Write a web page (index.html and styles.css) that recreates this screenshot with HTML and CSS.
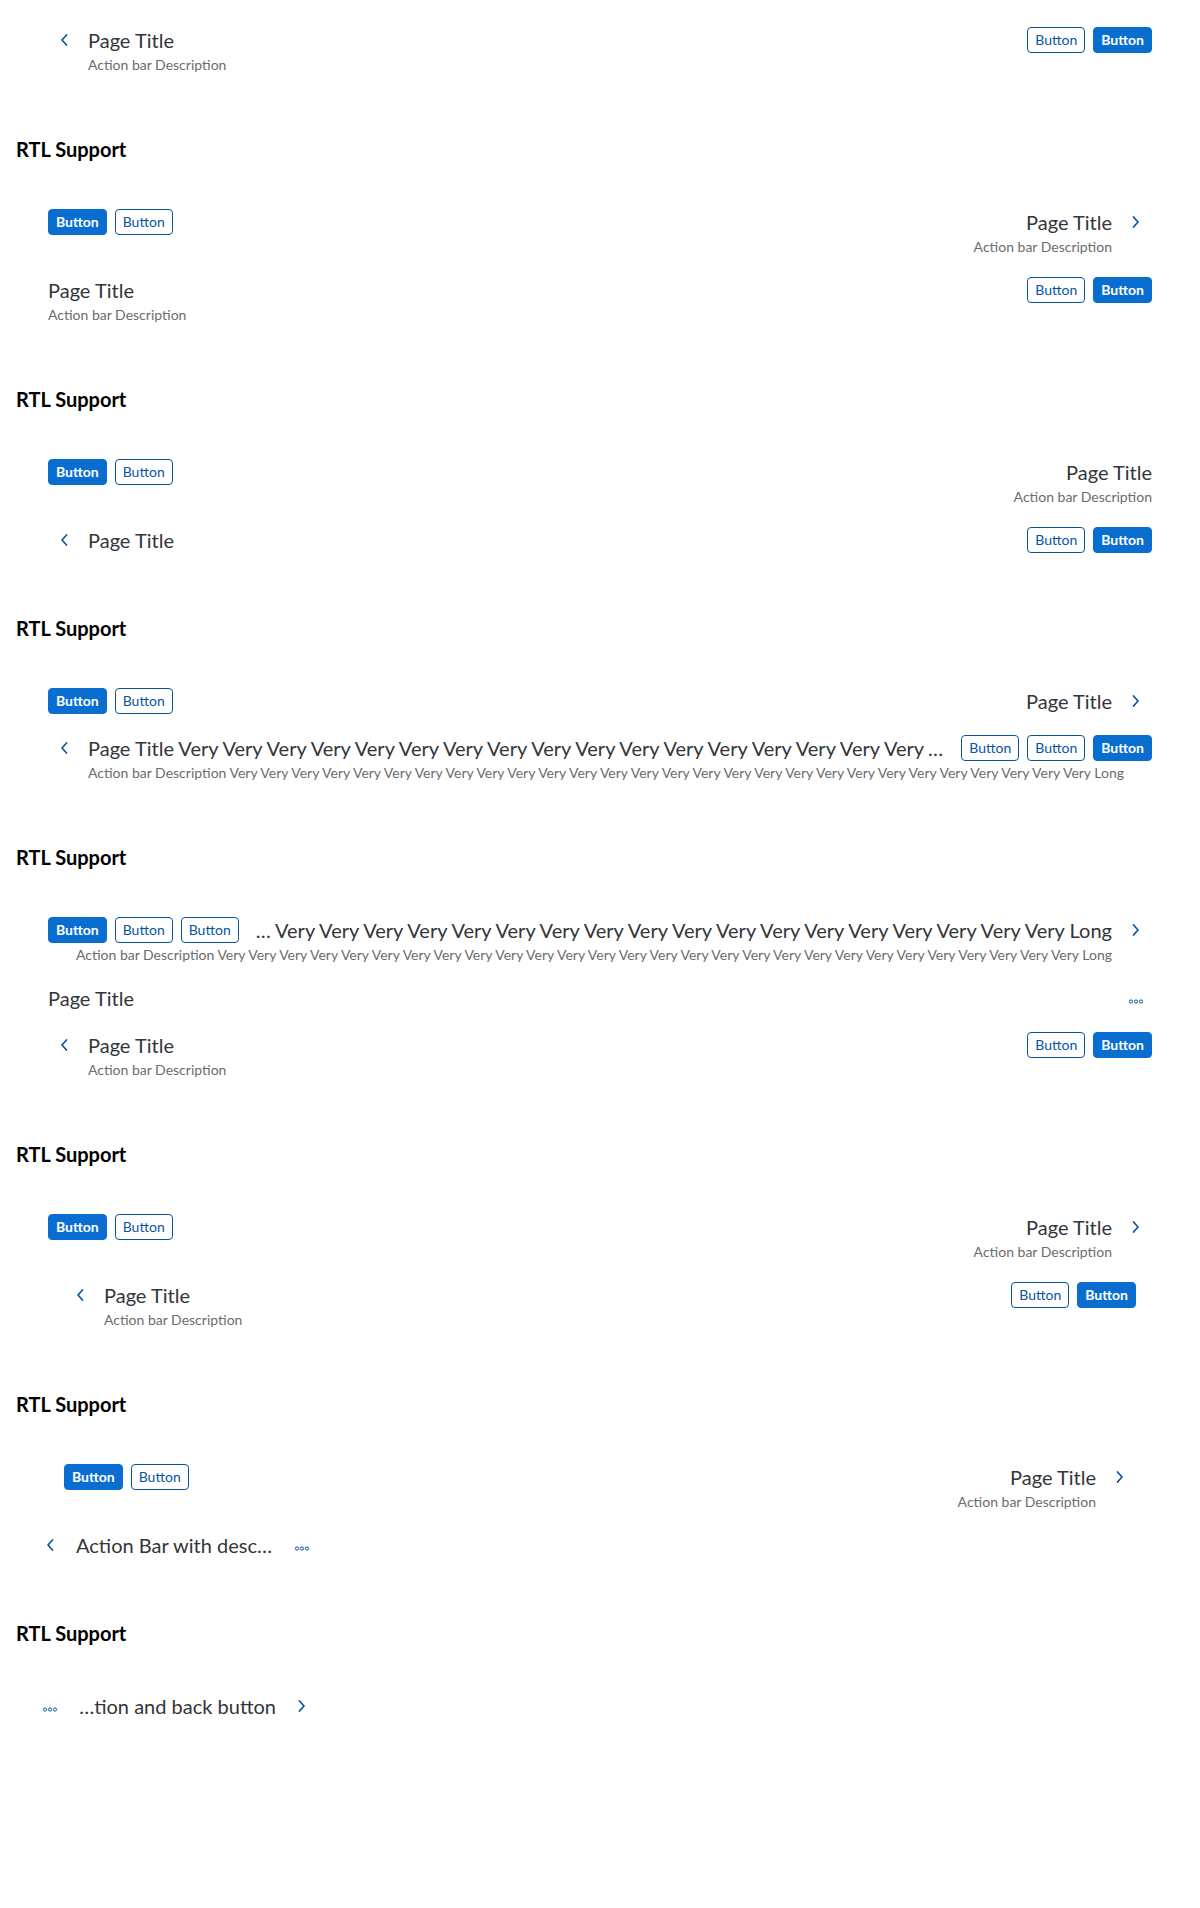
FILE: index.html
```html
<!DOCTYPE html>
<html lang="en">
<head>
<meta charset="utf-8">
<title>Action Bar</title>
<link rel="stylesheet" href="styles.css">
</head>
<body>
<div class="page">

  <!-- Example 1 -->
  <div class="bar">
    <div class="bar-header">
      <button class="icon-btn back" aria-label="back"><svg width="10" height="14" viewBox="0 0 10 14"><polyline points="7.5,2 3,7 7.5,12" fill="none" stroke="currentColor" stroke-width="1.7" stroke-linecap="round" stroke-linejoin="round"/></svg></button>
      <h2 class="bar-title">Page Title</h2>
    </div>
    <div class="bar-actions"><button class="btn">Button</button><button class="btn btn--emph">Button</button></div>
    <p class="bar-desc bar-desc--indent">Action bar Description</p>
  </div>
  <h3 class="section-title">RTL Support</h3>
  <div class="bar" dir="rtl">
    <div class="bar-header">
      <button class="icon-btn back" aria-label="back"><svg width="10" height="14" viewBox="0 0 10 14"><polyline points="7.5,2 3,7 7.5,12" fill="none" stroke="currentColor" stroke-width="1.7" stroke-linecap="round" stroke-linejoin="round"/></svg></button>
      <h2 class="bar-title">Page Title</h2>
    </div>
    <div class="bar-actions"><button class="btn">Button</button><button class="btn btn--emph">Button</button></div>
    <p class="bar-desc bar-desc--indent">Action bar Description</p>
  </div>

  <!-- Example 2 -->
  <div class="bar">
    <div class="bar-header">
      <h2 class="bar-title">Page Title</h2>
    </div>
    <div class="bar-actions"><button class="btn">Button</button><button class="btn btn--emph">Button</button></div>
    <p class="bar-desc">Action bar Description</p>
  </div>
  <h3 class="section-title">RTL Support</h3>
  <div class="bar" dir="rtl">
    <div class="bar-header">
      <h2 class="bar-title">Page Title</h2>
    </div>
    <div class="bar-actions"><button class="btn">Button</button><button class="btn btn--emph">Button</button></div>
    <p class="bar-desc">Action bar Description</p>
  </div>

  <!-- Example 3 -->
  <div class="bar">
    <div class="bar-header">
      <button class="icon-btn back" aria-label="back"><svg width="10" height="14" viewBox="0 0 10 14"><polyline points="7.5,2 3,7 7.5,12" fill="none" stroke="currentColor" stroke-width="1.7" stroke-linecap="round" stroke-linejoin="round"/></svg></button>
      <h2 class="bar-title">Page Title</h2>
    </div>
    <div class="bar-actions"><button class="btn">Button</button><button class="btn btn--emph">Button</button></div>
  </div>
  <h3 class="section-title">RTL Support</h3>
  <div class="bar" dir="rtl">
    <div class="bar-header">
      <button class="icon-btn back" aria-label="back"><svg width="10" height="14" viewBox="0 0 10 14"><polyline points="7.5,2 3,7 7.5,12" fill="none" stroke="currentColor" stroke-width="1.7" stroke-linecap="round" stroke-linejoin="round"/></svg></button>
      <h2 class="bar-title">Page Title</h2>
    </div>
    <div class="bar-actions"><button class="btn">Button</button><button class="btn btn--emph">Button</button></div>
  </div>

  <!-- Example 4 -->
  <div class="bar">
    <div class="bar-header">
      <button class="icon-btn back" aria-label="back"><svg width="10" height="14" viewBox="0 0 10 14"><polyline points="7.5,2 3,7 7.5,12" fill="none" stroke="currentColor" stroke-width="1.7" stroke-linecap="round" stroke-linejoin="round"/></svg></button>
      <h2 class="bar-title">Page Title Very Very Very Very Very Very Very Very Very Very Very Very Very Very Very Very Very Very Very Very Very Very Very Very Very Very Very Very Long</h2>
    </div>
    <div class="bar-actions"><button class="btn">Button</button><button class="btn">Button</button><button class="btn btn--emph">Button</button></div>
    <p class="bar-desc bar-desc--indent">Action bar Description Very Very Very Very Very Very Very Very Very Very Very Very Very Very Very Very Very Very Very Very Very Very Very Very Very Very Very Very Long</p>
  </div>
  <h3 class="section-title">RTL Support</h3>
  <div class="bar" dir="rtl">
    <div class="bar-header">
      <button class="icon-btn back" aria-label="back"><svg width="10" height="14" viewBox="0 0 10 14"><polyline points="7.5,2 3,7 7.5,12" fill="none" stroke="currentColor" stroke-width="1.7" stroke-linecap="round" stroke-linejoin="round"/></svg></button>
      <h2 class="bar-title">Page Title Very Very Very Very Very Very Very Very Very Very Very Very Very Very Very Very Very Very Very Very Very Very Very Very Very Very Very Very Long</h2>
    </div>
    <div class="bar-actions"><button class="btn">Button</button><button class="btn">Button</button><button class="btn btn--emph">Button</button></div>
    <p class="bar-desc bar-desc--indent">Action bar Description Very Very Very Very Very Very Very Very Very Very Very Very Very Very Very Very Very Very Very Very Very Very Very Very Very Very Very Very Long</p>
  </div>

  <!-- Overflow row -->
  <div class="bar">
    <div class="bar-header">
      <h2 class="bar-title">Page Title</h2>
    </div>
    <div class="bar-actions">
      <button class="icon-btn" aria-label="more"><svg width="16" height="16" viewBox="0 0 16 16"><g fill="none" stroke="currentColor" stroke-width="1"><circle cx="3" cy="11.5" r="1.6"/><circle cx="8" cy="11.5" r="1.6"/><circle cx="13" cy="11.5" r="1.6"/></g></svg></button>
    </div>
  </div>

  <!-- Example 5 -->
  <div class="bar">
    <div class="bar-header">
      <button class="icon-btn back" aria-label="back"><svg width="10" height="14" viewBox="0 0 10 14"><polyline points="7.5,2 3,7 7.5,12" fill="none" stroke="currentColor" stroke-width="1.7" stroke-linecap="round" stroke-linejoin="round"/></svg></button>
      <h2 class="bar-title">Page Title</h2>
    </div>
    <div class="bar-actions"><button class="btn">Button</button><button class="btn btn--emph">Button</button></div>
    <p class="bar-desc bar-desc--indent">Action bar Description</p>
  </div>
  <h3 class="section-title">RTL Support</h3>
  <div class="bar" dir="rtl">
    <div class="bar-header">
      <button class="icon-btn back" aria-label="back"><svg width="10" height="14" viewBox="0 0 10 14"><polyline points="7.5,2 3,7 7.5,12" fill="none" stroke="currentColor" stroke-width="1.7" stroke-linecap="round" stroke-linejoin="round"/></svg></button>
      <h2 class="bar-title">Page Title</h2>
    </div>
    <div class="bar-actions"><button class="btn">Button</button><button class="btn btn--emph">Button</button></div>
    <p class="bar-desc bar-desc--indent">Action bar Description</p>
  </div>

  <!-- Example 6: indented -->
  <div class="bar bar--indent">
    <div class="bar-header">
      <button class="icon-btn back" aria-label="back"><svg width="10" height="14" viewBox="0 0 10 14"><polyline points="7.5,2 3,7 7.5,12" fill="none" stroke="currentColor" stroke-width="1.7" stroke-linecap="round" stroke-linejoin="round"/></svg></button>
      <h2 class="bar-title">Page Title</h2>
    </div>
    <div class="bar-actions"><button class="btn">Button</button><button class="btn btn--emph">Button</button></div>
    <p class="bar-desc bar-desc--indent">Action bar Description</p>
  </div>
  <h3 class="section-title">RTL Support</h3>
  <div class="bar bar--indent" dir="rtl">
    <div class="bar-header">
      <button class="icon-btn back" aria-label="back"><svg width="10" height="14" viewBox="0 0 10 14"><polyline points="7.5,2 3,7 7.5,12" fill="none" stroke="currentColor" stroke-width="1.7" stroke-linecap="round" stroke-linejoin="round"/></svg></button>
      <h2 class="bar-title">Page Title</h2>
    </div>
    <div class="bar-actions"><button class="btn">Button</button><button class="btn btn--emph">Button</button></div>
    <p class="bar-desc bar-desc--indent">Action bar Description</p>
  </div>

  <!-- Example 7: compact width -->
  <div class="bar bar--narrow">
    <div class="bar-header">
      <button class="icon-btn icon-btn--cozy back" aria-label="back"><svg width="10" height="14" viewBox="0 0 10 14"><polyline points="7.5,2 3,7 7.5,12" fill="none" stroke="currentColor" stroke-width="1.7" stroke-linecap="round" stroke-linejoin="round"/></svg></button>
      <h2 class="bar-title bar-title--narrow">Action Bar with description and back button</h2>
    </div>
    <div class="bar-actions">
      <button class="icon-btn icon-btn--cozy" aria-label="more"><svg width="16" height="16" viewBox="0 0 16 16"><g fill="none" stroke="currentColor" stroke-width="1"><circle cx="3" cy="11.5" r="1.6"/><circle cx="8" cy="11.5" r="1.6"/><circle cx="13" cy="11.5" r="1.6"/></g></svg></button>
    </div>
  </div>
  <h3 class="section-title">RTL Support</h3>
  <div class="bar bar--narrow" dir="rtl">
    <div class="bar-header">
      <button class="icon-btn icon-btn--cozy back" aria-label="back"><svg width="10" height="14" viewBox="0 0 10 14"><polyline points="7.5,2 3,7 7.5,12" fill="none" stroke="currentColor" stroke-width="1.7" stroke-linecap="round" stroke-linejoin="round"/></svg></button>
      <h2 class="bar-title bar-title--narrow">Action Bar with description and back button</h2>
    </div>
    <div class="bar-actions">
      <button class="icon-btn icon-btn--cozy" aria-label="more"><svg width="16" height="16" viewBox="0 0 16 16"><g fill="none" stroke="currentColor" stroke-width="1"><circle cx="3" cy="11.5" r="1.6"/><circle cx="8" cy="11.5" r="1.6"/><circle cx="13" cy="11.5" r="1.6"/></g></svg></button>
    </div>
  </div>

</div>
</body>
</html>
```

FILE: styles.css
```css
* {
  box-sizing: border-box;
}

body {
  margin: 0;
  background: #ffffff;
  font-family: Lato, "Noto Sans", sans-serif;
  color: #32363a;
}

.page {
  padding: 16px;
}

.section-title {
  margin: 53px 0 37px;
  font-size: 20px;
  line-height: 24px;
  font-weight: 700;
  color: #000000;
}

.bar {
  display: flex;
  flex-wrap: wrap;
  align-items: center;
  justify-content: space-between;
  padding: 8px 32px 7px;
}

.bar--indent {
  padding-left: 48px;
  padding-right: 48px;
}

.bar--narrow {
  width: 320px;
  padding-left: 16px;
  padding-right: 16px;
  justify-content: flex-start;
}

.bar-header {
  display: flex;
  align-items: center;
  height: 32px;
  flex: 1 1 0;
  min-width: 0;
}

.bar--narrow .bar-header {
  flex: none;
}

.bar-title {
  margin: 0;
  min-width: 0;
  font-size: 20px;
  line-height: 32px;
  font-weight: 400;
  color: #32363a;
  white-space: nowrap;
  overflow: hidden;
  text-overflow: ellipsis;
}

.bar-title--narrow {
  width: 200px;
  flex: none;
}

.icon-btn {
  flex: none;
  width: 32px;
  height: 32px;
  padding: 0;
  border: 0;
  background: transparent;
  display: flex;
  align-items: center;
  justify-content: center;
  color: #0854a0;
}

.icon-btn--cozy {
  width: 36px;
}

.back {
  margin-inline-end: 8px;
}

[dir="rtl"] .back svg {
  transform: scaleX(-1);
}

.bar-actions {
  display: flex;
  gap: 8px;
  flex: none;
  margin-inline-start: 8px;
}

.btn {
  font: inherit;
  font-size: 14px;
  height: 26px;
  line-height: 24px;
  padding: 0 7px;
  border-radius: 4px;
  border: 1px solid #0854a0;
  background: #ffffff;
  color: #0854a0;
}

.btn--emph {
  background: #0a6ed1;
  border-color: #0a6ed1;
  color: #ffffff;
  font-weight: 700;
}

.bar-desc {
  flex: 0 0 100%;
  margin: 0;
  font-size: 14px;
  line-height: 17px;
  padding-bottom: 4px;
  color: #6a6d70;
  white-space: nowrap;
}

.bar-desc--indent {
  padding-inline-start: 40px;
}
```
